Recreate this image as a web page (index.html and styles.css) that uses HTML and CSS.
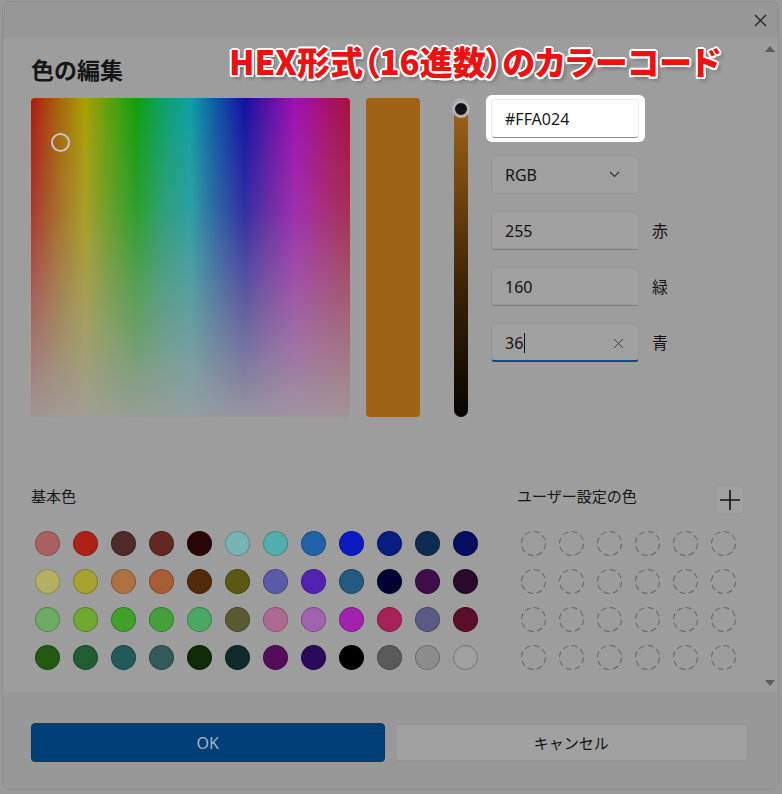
FILE: index.html
```html
<!DOCTYPE html>
<html lang="ja">
<head>
<meta charset="utf-8">
<title>色の編集</title>
<link rel="stylesheet" href="styles.css">
</head>
<body>
<svg class="defs" width="0" height="0" aria-hidden="true">
  <symbol id="dc" viewBox="0 0 25 25"><circle cx="12.5" cy="12.5" r="12" fill="none" stroke="#6c6c6c" stroke-width="1.1" stroke-dasharray="6 3.4"/></symbol>
</svg>
<div class="dialog">
  <div class="titlebar">
    <svg class="close" width="13" height="13" viewBox="0 0 13 13"><path d="M1 1L12 12M12 1L1 12" stroke="#1a1a1a" stroke-width="1.2" fill="none"/></svg>
  </div>
  <div class="content">
    <div class="main">
      <h1 class="title">色の編集</h1>
      <div class="picker">
        <div class="spectrum"><span class="cursor"></span></div>
        <div class="preview"></div>
        <div class="slider"><span class="thumb"></span></div>
        <div class="fields">
          <div class="frow">
            <div class="hex-hl"><div class="input hex">#FFA024</div></div>
          </div>
          <div class="frow">
            <div class="input combo">RGB
              <svg class="chev" width="11" height="7" viewBox="0 0 11 7"><path d="M1 1L5.5 5.5L10 1" stroke="#333" stroke-width="1.1" fill="none"/></svg>
            </div>
          </div>
          <div class="frow"><div class="input">255</div><span class="flabel">赤</span></div>
          <div class="frow"><div class="input">160</div><span class="flabel">緑</span></div>
          <div class="frow"><div class="input active">36<span class="caret"></span>
              <svg class="clear" width="11" height="11" viewBox="0 0 11 11"><path d="M1 1L10 10M10 1L1 10" stroke="#444" stroke-width="1" fill="none"/></svg>
            </div><span class="flabel">青</span></div>
        </div>
      </div>
      <div class="palettes">
        <div class="basic">
          <div class="section-head">基本色</div>
          <div class="grid12">
            <span class="sw" style="background:#a86262"></span>
            <span class="sw" style="background:#ae2119"></span>
            <span class="sw" style="background:#4f2b2a"></span>
            <span class="sw" style="background:#612922"></span>
            <span class="sw" style="background:#290606"></span>
            <span class="sw" style="background:#78b3b3"></span>
            <span class="sw" style="background:#52adac"></span>
            <span class="sw" style="background:#2262a8"></span>
            <span class="sw" style="background:#0a1cc0"></span>
            <span class="sw" style="background:#0a1c80"></span>
            <span class="sw" style="background:#0e2b52"></span>
            <span class="sw" style="background:#060e62"></span>

            <span class="sw" style="background:#b3b062"></span>
            <span class="sw" style="background:#a8a030"></span>
            <span class="sw" style="background:#ae7142"></span>
            <span class="sw" style="background:#a85d36"></span>
            <span class="sw" style="background:#51290b"></span>
            <span class="sw" style="background:#595913"></span>
            <span class="sw" style="background:#5a5aa8"></span>
            <span class="sw" style="background:#5222b0"></span>
            <span class="sw" style="background:#235a82"></span>
            <span class="sw" style="background:#020232"></span>
            <span class="sw" style="background:#3d0e4a"></span>
            <span class="sw" style="background:#2a0a2a"></span>

            <span class="sw" style="background:#6bab62"></span>
            <span class="sw" style="background:#71a832"></span>
            <span class="sw" style="background:#42a02a"></span>
            <span class="sw" style="background:#43a03a"></span>
            <span class="sw" style="background:#4aa862"></span>
            <span class="sw" style="background:#5a5b32"></span>
            <span class="sw" style="background:#ae6991"></span>
            <span class="sw" style="background:#a162b0"></span>
            <span class="sw" style="background:#a222b0"></span>
            <span class="sw" style="background:#a8225a"></span>
            <span class="sw" style="background:#5a5a82"></span>
            <span class="sw" style="background:#5a0e2a"></span>

            <span class="sw" style="background:#225a12"></span>
            <span class="sw" style="background:#225d32"></span>
            <span class="sw" style="background:#225a5a"></span>
            <span class="sw" style="background:#325a5a"></span>
            <span class="sw" style="background:#0e2a06"></span>
            <span class="sw" style="background:#0e2a2a"></span>
            <span class="sw" style="background:#520e5a"></span>
            <span class="sw" style="background:#2a0a5a"></span>
            <span class="sw" style="background:#000000"></span>
            <span class="sw" style="background:#5a5a5a"></span>
            <span class="sw" style="background:#8c8c8c"></span>
            <span class="sw white"></span>
          </div>
        </div>
        <div class="custom">
          <div class="section-head custom-head">
            <span>ユーザー設定の色</span>
            <button class="add"><svg width="22" height="22" viewBox="0 0 22 22"><path d="M11 1V21M1 11H21" stroke="#151515" stroke-width="1.6" fill="none"/></svg></button>
          </div>
          <div class="grid6">
            <svg class="dc"><use href="#dc"/></svg><svg class="dc"><use href="#dc"/></svg><svg class="dc"><use href="#dc"/></svg><svg class="dc"><use href="#dc"/></svg><svg class="dc"><use href="#dc"/></svg><svg class="dc"><use href="#dc"/></svg>
            <svg class="dc"><use href="#dc"/></svg><svg class="dc"><use href="#dc"/></svg><svg class="dc"><use href="#dc"/></svg><svg class="dc"><use href="#dc"/></svg><svg class="dc"><use href="#dc"/></svg><svg class="dc"><use href="#dc"/></svg>
            <svg class="dc"><use href="#dc"/></svg><svg class="dc"><use href="#dc"/></svg><svg class="dc"><use href="#dc"/></svg><svg class="dc"><use href="#dc"/></svg><svg class="dc"><use href="#dc"/></svg><svg class="dc"><use href="#dc"/></svg>
            <svg class="dc"><use href="#dc"/></svg><svg class="dc"><use href="#dc"/></svg><svg class="dc"><use href="#dc"/></svg><svg class="dc"><use href="#dc"/></svg><svg class="dc"><use href="#dc"/></svg><svg class="dc"><use href="#dc"/></svg>
          </div>
        </div>
      </div>
    </div>
    <div class="scrollbar">
      <span class="arrow up"></span>
      <span class="arrow down"></span>
    </div>
  </div>
  <div class="footer">
    <button class="btn ok">OK</button>
    <button class="btn cancel">キャンセル</button>
  </div>
</div>
<div class="annotation">HEX形式（16進数）のカラーコード</div>
</body>
</html>
```
FILE: styles.css
```css
* { box-sizing: border-box; }
html, body { margin: 0; padding: 0; }
body {
  width: 782px;
  height: 794px;
  overflow: hidden;
  position: relative;
  background: #9a9a9a;
  font-family: "Noto Sans CJK JP", "Noto Sans", sans-serif;
  color: #141414;
}
.defs { position: absolute; }

.dialog {
  margin: 1px 0 0 2px;
  width: 777px;
  height: 789px;
  border: 1px solid #8e8e8e;
  border-radius: 8px;
  overflow: hidden;
  display: flex;
  flex-direction: column;
  background: #9d9d9d;
}
.titlebar {
  height: 36px;
  flex: none;
  background: #979797;
  display: flex;
  justify-content: flex-end;
  align-items: center;
  padding-right: 11px;
}
.close { display: block; margin-top: 1px; }

.content {
  height: 654px;
  flex: none;
  display: flex;
  background: #9d9d9d;
}
.main { flex: 1; padding-left: 28px; }
.title {
  margin: 16px 0 14px;
  font-size: 23px;
  line-height: 30px;
  font-weight: 700;
  color: #161616;
}

.picker { display: flex; height: 319px; }
.spectrum {
  width: 319px;
  border-radius: 4px;
  position: relative;
  background:
    linear-gradient(to bottom, rgba(160,158,159,0) 0%, rgba(160,158,159,0.22) 35%, rgba(160,158,159,0.55) 65%, rgba(160,158,159,0.93) 100%),
    linear-gradient(to right, #ae1a10 0%, #a8600a 8%, #a8a004 17%, #58a00a 25%, #0ea00e 33%, #0ea070 42%, #0ea0a4 50%, #0e58a4 58%, #1410a4 67%, #6010a8 75%, #a010b2 83%, #a81070 92%, #a8103a 100%);
}
.cursor {
  position: absolute;
  left: 20px;
  top: 35px;
  width: 19px;
  height: 19px;
  border-radius: 50%;
  border: 2px solid #c6c6c6;
}
.preview {
  width: 54px;
  margin-left: 16px;
  border-radius: 4px;
  background: #9f6318;
}
.slider {
  width: 14px;
  margin-left: 34px;
  border-radius: 7px;
  position: relative;
  background: linear-gradient(to bottom, #a9a9a9 0px, #a9a9a9 10px, #9c6117 14px, #3a2208 60%, #050403 100%);
}
.thumb {
  position: absolute;
  left: -2px;
  top: 2px;
  width: 18px;
  height: 18px;
  border-radius: 50%;
  background: #121218;
  border: 3px solid #b4b4b4;
}

.fields {
  margin-left: 23px;
  padding-top: 1px;
  display: flex;
  flex-direction: column;
  gap: 17px;
}
.frow { display: flex; align-items: center; gap: 13px; height: 39px; }
.input {
  width: 148px;
  height: 39px;
  background: #a0a0a0;
  border: 1px solid #979797;
  border-bottom-color: #7c7c7c;
  border-radius: 4px;
  padding: 0 12px 0 13px;
  display: flex;
  align-items: center;
  position: relative;
  font-family: "Noto Sans", "Noto Sans CJK JP", sans-serif;
  font-size: 16px;
  color: #151515;
}
.hex-hl {
  background: #ffffff;
  border-radius: 6px;
  padding: 4px 6px 4px 5px;
  margin: -4px -6px -4px -5px;
}
.input.hex {
  background: #ffffff;
  border-color: #ececec;
  border-bottom-color: #8a8a8a;
  color: #1a1a1a;
}
.input.combo { border-bottom-color: #979797; justify-content: space-between; padding-right: 18px; }
.chev { display: block; }
.input.active { border-bottom: 2px solid #0b4b89; padding-top: 1px; }
.caret { display: inline-block; width: 1px; height: 20px; background: #111; margin-left: 1px; }
.clear { position: absolute; left: 121px; top: 14px; }
.flabel { font-size: 16px; line-height: 20px; color: #161616; margin-top: -2px; }

.palettes { display: flex; margin-top: 69px; }
.basic { width: 486px; }
.section-head { height: 20px; line-height: 20px; font-size: 15px; color: #161616; }
.grid12 {
  margin-top: 25px;
  padding-left: 4px;
  display: grid;
  grid-template-columns: repeat(12, 25px);
  gap: 13px;
}
.sw {
  width: 25px;
  height: 25px;
  border-radius: 50%;
  border: 1px solid rgba(0,0,0,0.22);
}
.sw.white { background: #a0a0a0; border-color: #747474; }

.custom { width: 227px; }
.custom-head { display: flex; justify-content: space-between; }
.add {
  align-self: flex-start;
  margin-top: -1px;
  width: 29px;
  height: 29px;
  padding: 0;
  border: 1px solid #999;
  border-radius: 4px;
  background: #a0a0a0;
  display: flex;
  align-items: center;
  justify-content: center;
}
.add svg { display: block; }
.grid6 {
  margin-top: 25px;
  padding-left: 4px;
  display: grid;
  grid-template-columns: repeat(6, 25px);
  gap: 13px;
}
.dc { width: 25px; height: 25px; display: block; }

.scrollbar {
  width: 16px;
  display: flex;
  flex-direction: column;
  justify-content: space-between;
  align-items: center;
  padding: 8px 0 6px;
}
.arrow { width: 0; height: 0; border-left: 5px solid transparent; border-right: 5px solid transparent; }
.arrow.up { border-bottom: 6px solid #5c5c5c; }
.arrow.down { border-top: 6px solid #5c5c5c; }

.footer {
  flex: 1;
  background: #989898;
  padding: 31px 30px 0 28px;
  display: grid;
  grid-template-columns: 1fr 1fr;
  column-gap: 10px;
  align-content: start;
}
.btn {
  height: 39px;
  border-radius: 4px;
  font-size: 16px;
  font-family: "Noto Sans", "Noto Sans CJK JP", sans-serif;
}
.btn.ok { background: #003f78; border: 1px solid #003a70; color: #a4b4c7; }
.btn.cancel {
  background: #a0a0a0;
  border: 1px solid #939393;
  color: #141414;
  font-family: "Noto Sans CJK JP", sans-serif;
  font-size: 15px;
  margin: 1px 0;
  height: 37px;
}

.annotation {
  position: absolute;
  left: 229px;
  top: 42px;
  font-size: 33px;
  line-height: 38px;
  font-weight: 900;
  color: #ee1111;
  white-space: nowrap;
  font-feature-settings: "palt";
  text-shadow:
    2px 0 0 #fff, -2px 0 0 #fff, 0 2px 0 #fff, 0 -2px 0 #fff,
    1.5px 1.5px 0 #fff, -1.5px 1.5px 0 #fff, 1.5px -1.5px 0 #fff, -1.5px -1.5px 0 #fff,
    3px 3px 4px rgba(0,0,0,0.35);
}
```
